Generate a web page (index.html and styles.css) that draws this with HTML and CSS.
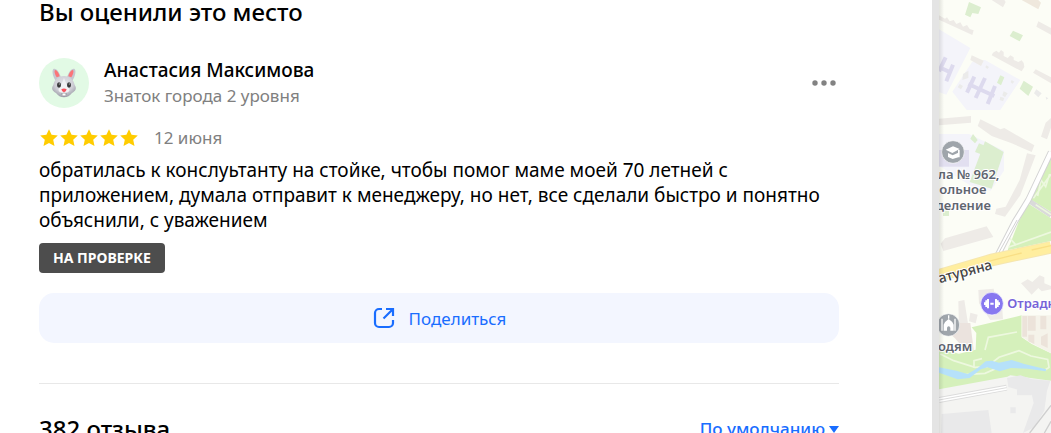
FILE: index.html
```html
<!DOCTYPE html>
<html lang="ru">
<head>
<meta charset="utf-8">
<meta name="viewport" content="width=device-width, initial-scale=1">
<title>Отзывы</title>
<link rel="stylesheet" href="styles.css">
</head>
<body>
<div class="layout">
  <main class="panel">
    <h2 class="title">Вы оценили это место</h2>
    <article class="review">
      <header class="author">
        <svg class="avatar" viewBox="0 0 150 150" role="img" aria-label="Аватар">
          <defs>
            <radialGradient id="fur" cx=".5" cy=".35" r=".65">
              <stop offset="0" stop-color="#e3e3e8"/><stop offset=".6" stop-color="#cfcfd6"/><stop offset="1" stop-color="#9d9da8"/>
            </radialGradient>
          </defs>
          <circle cx="75" cy="75" r="75" fill="#e2fae5"/>
          <path d="M50 68C41 54 38 39 43 33c7-5 19 8 24 29zM100 68c9-14 12-29 7-35-7-5-19 8-24 29z" fill="#c6c6cf"/>
          <path d="M53 58c-6-10-8-19-5-22 5-1 12 9 14 19zM97 58c6-10 8-19 5-22-5-1-12 9-14 19z" fill="#fb7478"/>
          <path d="M75 54c19 0 29 12 32 27 7 10 3 18-8 24-6 8-14 13-24 13s-18-5-24-13c-11-6-15-14-8-24 3-15 13-27 32-27z" fill="url(#fur)"/>
          <path d="M75 60c5 12 8 24 16 32 2 8-4 12-16 12s-18-4-16-12c8-8 11-20 16-32z" fill="#f1f1f4"/>
          <ellipse cx="60" cy="81" rx="6" ry="8" fill="#38383a"/>
          <ellipse cx="90" cy="81" rx="6" ry="8" fill="#38383a"/>
          <circle cx="61" cy="78" r="2" fill="#aaa"/><circle cx="91" cy="78" r="2" fill="#aaa"/>
          <path d="M67 94q8-5 16 0-2 7-8 9-6-2-8-9z" fill="#f9515d"/>
          <path d="M67 107q8-5 16 0-3 8-8 8t-8-8z" fill="#77777f"/>
          <path d="M70 106h10v7H70z" fill="#fff"/>
        </svg>
        <div class="who">
          <div class="name">Анастасия Максимова</div>
          <div class="level">Знаток города 2 уровня</div>
        </div>
        <button class="more" type="button" aria-label="Ещё">
          <svg width="24" height="8" viewBox="0 0 24 8" fill="#828282"><circle cx="3" cy="4" r="2.7"/><circle cx="12" cy="4" r="2.7"/><circle cx="21" cy="4" r="2.7"/></svg>
        </button>
      </header>
      <div class="rating">
        <svg class="stars" viewBox="0 0 100 20" fill="#fc0" role="img" aria-label="Оценка 5">
          <defs><path id="star" d="M10 1.200l2.600 5.600 6.200.7-4.600 4.200 1.300 6.300L10 14.900l-5.500 3.100 1.300-6.300-4.600-4.200 6.200-.7z"/></defs>
          <use href="#star"/><use href="#star" x="20"/><use href="#star" x="40"/><use href="#star" x="60"/><use href="#star" x="80"/>
        </svg>
        <time class="date">12 июня</time>
      </div>
      <p class="text">обратилась к конслуьтанту на стойке, чтобы помог маме моей 70 летней с приложением, думала отправит к менеджеру, но нет, все сделали быстро и понятно объяснили, с уважением</p>
      <div class="status">НА ПРОВЕРКЕ</div>
      <button class="share" type="button">
        <svg width="24" height="24" viewBox="0 0 24 24" fill="none" stroke="#196dff" stroke-width="2.200">
          <path d="M10 3H7a4 4 0 0 0-4 4v10a4 4 0 0 0 4 4h10a4 4 0 0 0 4-4v-3M14 3h7v7M21 3l-9.500 9.500"/>
        </svg>
        <span>Поделиться</span>
      </button>
    </article>
    <div class="list-head">
      <h2 class="count">382 отзыва</h2>
      <button class="sort" type="button">По умолчанию
        <svg width="10" height="8" viewBox="0 0 10 8" fill="#196dff"><path d="M0 1h10L5 8z"/></svg>
      </button>
    </div>
  </main>
  <div class="gutter"></div>
  <aside class="map">
    <svg class="map-canvas" viewBox="42 0 336 1299" preserveAspectRatio="xMinYMin slice" role="img" aria-label="Карта">
      <rect x="42" width="2000" height="1299" fill="#fcfdf6"/>
      <g fill="#f4f4fa">
        <path d="M42 88l94 56-72 140-22-8zM180 180l106 60-60 90H125l-43-55 60-90zM42 402l90 0 105 50v60l-40 60-60-15-95-60z"/>
      </g>
      <g fill="#eeebe7">
        <path d="M42 46l18 10 6-4 8 12 12-4 8 12 12-5 8 13 12-5 8 12 12 4-4 14-100-46z"/>
        <path d="M204 158l10-6 8 6 6-8 8 6v12l12 6 8-8 10 6v8l14 6 10-5 6 8 2 12-8 13-90-48zM332 208l46 24v18l-54-32zM340 64l38 20v20l-44-24zM200 0h38l4 6-8 16zM140 166l36 16-8 16-32-18z"/>
        <path d="M42 356l96-8v20l-96 8zM166 358l60 30 12-4 90 52-8 20-60-26-60-22-42-30zM306 460l26 6-46 120-46 64-30-8 4-16 28-6 42-80zM362 368l16-14v30l-12 34-18-8z"/>
        <path d="M60 715l125-36 20 32-150 42-8-22zM288 850l20-12 14 8 22-20 14 6v18l20 8v10l-28 6-10-10-20 20zM160 870l46-4 4 26 20 6 4 60-38 2-34-50zM100 904l18-4 14 90h-30zM136 938l22 6-6 26-20-6z"/>
      </g>
      <path d="M290 0h50l8 8-8 20z" fill="#efe8dd"/>
      <g fill="#dceecf">
        <path d="M132 6l36 16-8 20-18-3-6 13-16-8zM264 92l30 14-10 18-30-16zM296 242l28 18-14 28-26-22zM226 226l12 6-10 24-12-8z"/>
        <path d="M144 402l14 18-8 10-14-14zM162 430l14 6-10 26-16-6zM180 424l56 32-36 110-66-20zM54 632h18v16H54z"/>
      </g>
      <path d="M62 172l-20 42M84 194l-20 50M48 204l30 14M148 230l-22 48M180 234l-28 60M210 258l-22 54M130 252l78 36" fill="none" stroke="#dddaee" stroke-width="12"/>
      <path d="M42 450h90v50H42z" fill="#e2dff0"/>
      <g fill="#ebebea"><path d="M114 222l16-10v22l-18 6zM104 252l10 6-6 10-10-6zM184 196l8 5-5 6-6-5zM260 240l8 5-6 6-5-5zM334 268l16 12-10 12-13-12zM236 274l12 6-8 12-8-6zM226 290l12 4-4 10-10-4zM362 290l8 5-6 4z"/></g>
      <path d="M312 602l66 44" fill="none" stroke="#dadada" stroke-width="15"/>
      <path d="M378 472v164l-63-40zM308 610l70 45v68l-130 28 34-88z" fill="#d5f0bb"/>
      <path d="M325 595l53-72M338 588l10-48 14 20 12-38M332 614l46 30M250 742l128-46M252 712l22 24" fill="none" stroke="#edf8df" stroke-width="5"/>
      <path d="M378 456l-68 144-40 65-54 105" fill="none" stroke="#d3d3d3" stroke-width="19"/>
      <path d="M378 456l-68 144-40 65-54 105" fill="none" stroke="#fff" stroke-width="13"/>
      <path d="M276 660l-58 104" stroke="#d3d3d3" stroke-width="3"/>
      <path d="M42 826l158-46 178-38" fill="none" stroke="#f5e6b0" stroke-width="38"/>
      <path d="M42 826l158-46 178-38" fill="none" stroke="#ffee9f" stroke-width="32"/>
      <path d="M190 784l100-25M320 750l58-13" stroke="#f9df85" stroke-width="4"/>
      <path d="M140 982l150-36v66l30 20 58 28v92l-38-8-92-12-206 45V1046l60 15 50-12 2-50z" fill="#d5f0bb"/>
      <path d="M100 969h36l10 80-20 8-36-42-22-20z" fill="#ebe3de"/>
      <path d="M290 946h88v114l-58-30-30-20z" fill="#f5f3ea"/>
      <path d="M292 948h14v62h-14zM308 948h24v44h-24zM346 948h18v40h-18zM310 1004h18v28l-18-8zM348 1010l20-10v44l-20-10z" fill="#ece3da"/>
      <path d="M42 1168l205-38 9-4 122 16v157H42z" fill="#f4f4f2"/>
      <path d="M50 1242l140-12 10 69H48zM246 1134l40-8 36 12 54 4-10 30-8 60-30 50-34 17 32-90-6-28-70-20zM276 1164h44v22h-44zM256 1222h16v18h-16z" fill="#e9e9ea"/>
      <path d="M46 1062l40 20 64 20 36-2 36-28 60-20 36 16 50 10 4 24-12 8-60-12-74 2-46 20-60 4-78-14M180 1050l10-38 86-16M147 1104v-22l24-6" fill="none" stroke="#edf8df" stroke-width="5"/>
      <path d="M42 1102l52 10 34 10 30-18 24-20 18-2 22 6 38-8 38 12 66 16-2 6-54-8-50-2-34 10-36-12-20 6-34 26-36 4-56-20z" fill="#b6e1fa"/>
      <path d="M42 1200l203-37" stroke="#dcdcdc" stroke-width="18"/>
      <path d="M42 1200l203-37" stroke="#fff" stroke-width="12"/>
      <path d="M42 1200l203-37" stroke="#dcdcdc" stroke-width="3"/>
      <path d="M378 1216l-64 83M378 1264l-20 35" stroke="#cfcfcf" stroke-width="4"/>
      <g stroke="#fff" stroke-width="2">
        <circle cx="84" cy="456" r="34" fill="#9fa5ab"/>
        <circle cx="70" cy="975" r="34" fill="#9fa5ab"/>
        <circle cx="201" cy="911" r="34" fill="#8878f0"/>
      </g>
      <path d="M62 449l22-10 20 8-22 12zM69 459l14 7 17-8v14l-17 5-14-6zM99 450h5v22h-5z" fill="#fff"/>
      <path d="M49 956h4v36h-4zM88 956h4v36h-4zM56 992v-18q4-10 15-17 11 7 15 17v18H76v-9q-5-8-10 0v9zM69 946h4v10h-4z" fill="#fff"/>
      <path d="M192 897v28h-6v-4h-5v-6h-4v-8h4v-6h5v-4zM210 897v28h6v-4h5v-6h4v-8h-4v-6h-5v-4zM196 908h10v6h-10z" fill="#fff"/>
      <g class="map-label">
        <text x="39" y="536">ла № 962,</text>
        <text x="43" y="582">ольное</text>
        <text x="32" y="629">деление</text>
        <text x="39" y="1054">одям</text>
        <text class="street" x="44" y="850" transform="rotate(-15 44 850)">атуряна</text>
        <text class="fitness" x="247" y="923">Отрадное</text>
      </g>
    </svg>
  </aside>
</div>
</body>
</html>
```
FILE: styles.css
```css
* {
  box-sizing: border-box;
}

body {
  margin: 0;
  background: #fff;
  color: #000;
  font-family: "Noto Sans", "Open Sans", sans-serif;
  font-size: 17px;
  line-height: 25px;
}

h2,
p {
  margin: 0;
}

button {
  border: 0;
  padding: 0;
  background: none;
  font: inherit;
  cursor: pointer;
}

.layout {
  display: flex;
  height: 100vh;
  overflow: hidden;
}

.panel {
  flex: 0 0 932px;
  padding: 0 93px 0 39px;
  overflow: hidden;
}

.title,
.count {
  font-size: 24px;
  font-weight: 500;
  line-height: 24px;
}

.author {
  display: flex;
  align-items: center;
  gap: 15px;
  margin-top: 34px;
}

.avatar {
  width: 50px;
  height: 50px;
}

.who {
  flex: 1;
}

.name {
  font-size: 19px;
  font-weight: 500;
}

.level,
.date {
  color: #808080;
}

.more {
  display: flex;
  padding: 8px 3px;
}

.rating {
  display: flex;
  align-items: center;
  gap: 15px;
  margin-top: 17px;
}

.stars {
  width: 100px;
  height: 20px;
}

.text {
  margin-top: 8px;
  font-size: 19px;
}

.status {
  width: fit-content;
  margin-top: 10px;
  padding: 0 14px;
  border-radius: 4px;
  background: #4d4d4d;
  color: #fff;
  font-size: 14px;
  font-weight: 700;
  line-height: 30px;
}

.share {
  display: flex;
  align-items: center;
  justify-content: center;
  gap: 13px;
  width: 100%;
  height: 50px;
  margin-top: 20px;
  border-radius: 15px;
  background: #f3f6ff;
  color: #196dff;
}

.list-head {
  display: flex;
  justify-content: space-between;
  align-items: center;
  margin-top: 40px;
  padding-top: 32px;
  border-top: 1px solid #e8e8e8;
}

.sort {
  display: flex;
  align-items: center;
  gap: 4px;
  color: #196dff;
  font-weight: 500;
}

.gutter {
  flex: 0 0 7px;
  background: #e4e4e4;
}

.map {
  position: relative;
  flex: 1;
  min-width: 0;
  overflow: hidden;
}

.map::after {
  content: "";
  position: absolute;
  inset: 0 auto 0 0;
  width: 5px;
  background: linear-gradient(to right, rgba(0, 0, 0, 0.1), transparent);
}

.map-canvas {
  display: block;
  width: 100%;
  height: 100%;
}

.map-label {
  fill: #5f6670;
  stroke: #fff;
  stroke-width: 6px;
  paint-order: stroke;
  font-size: 39px;
  font-weight: 600;
}

.street {
  fill: #444;
  font-size: 42px;
  font-weight: 500;
}

.fitness {
  fill: #7763d8;
}
```
